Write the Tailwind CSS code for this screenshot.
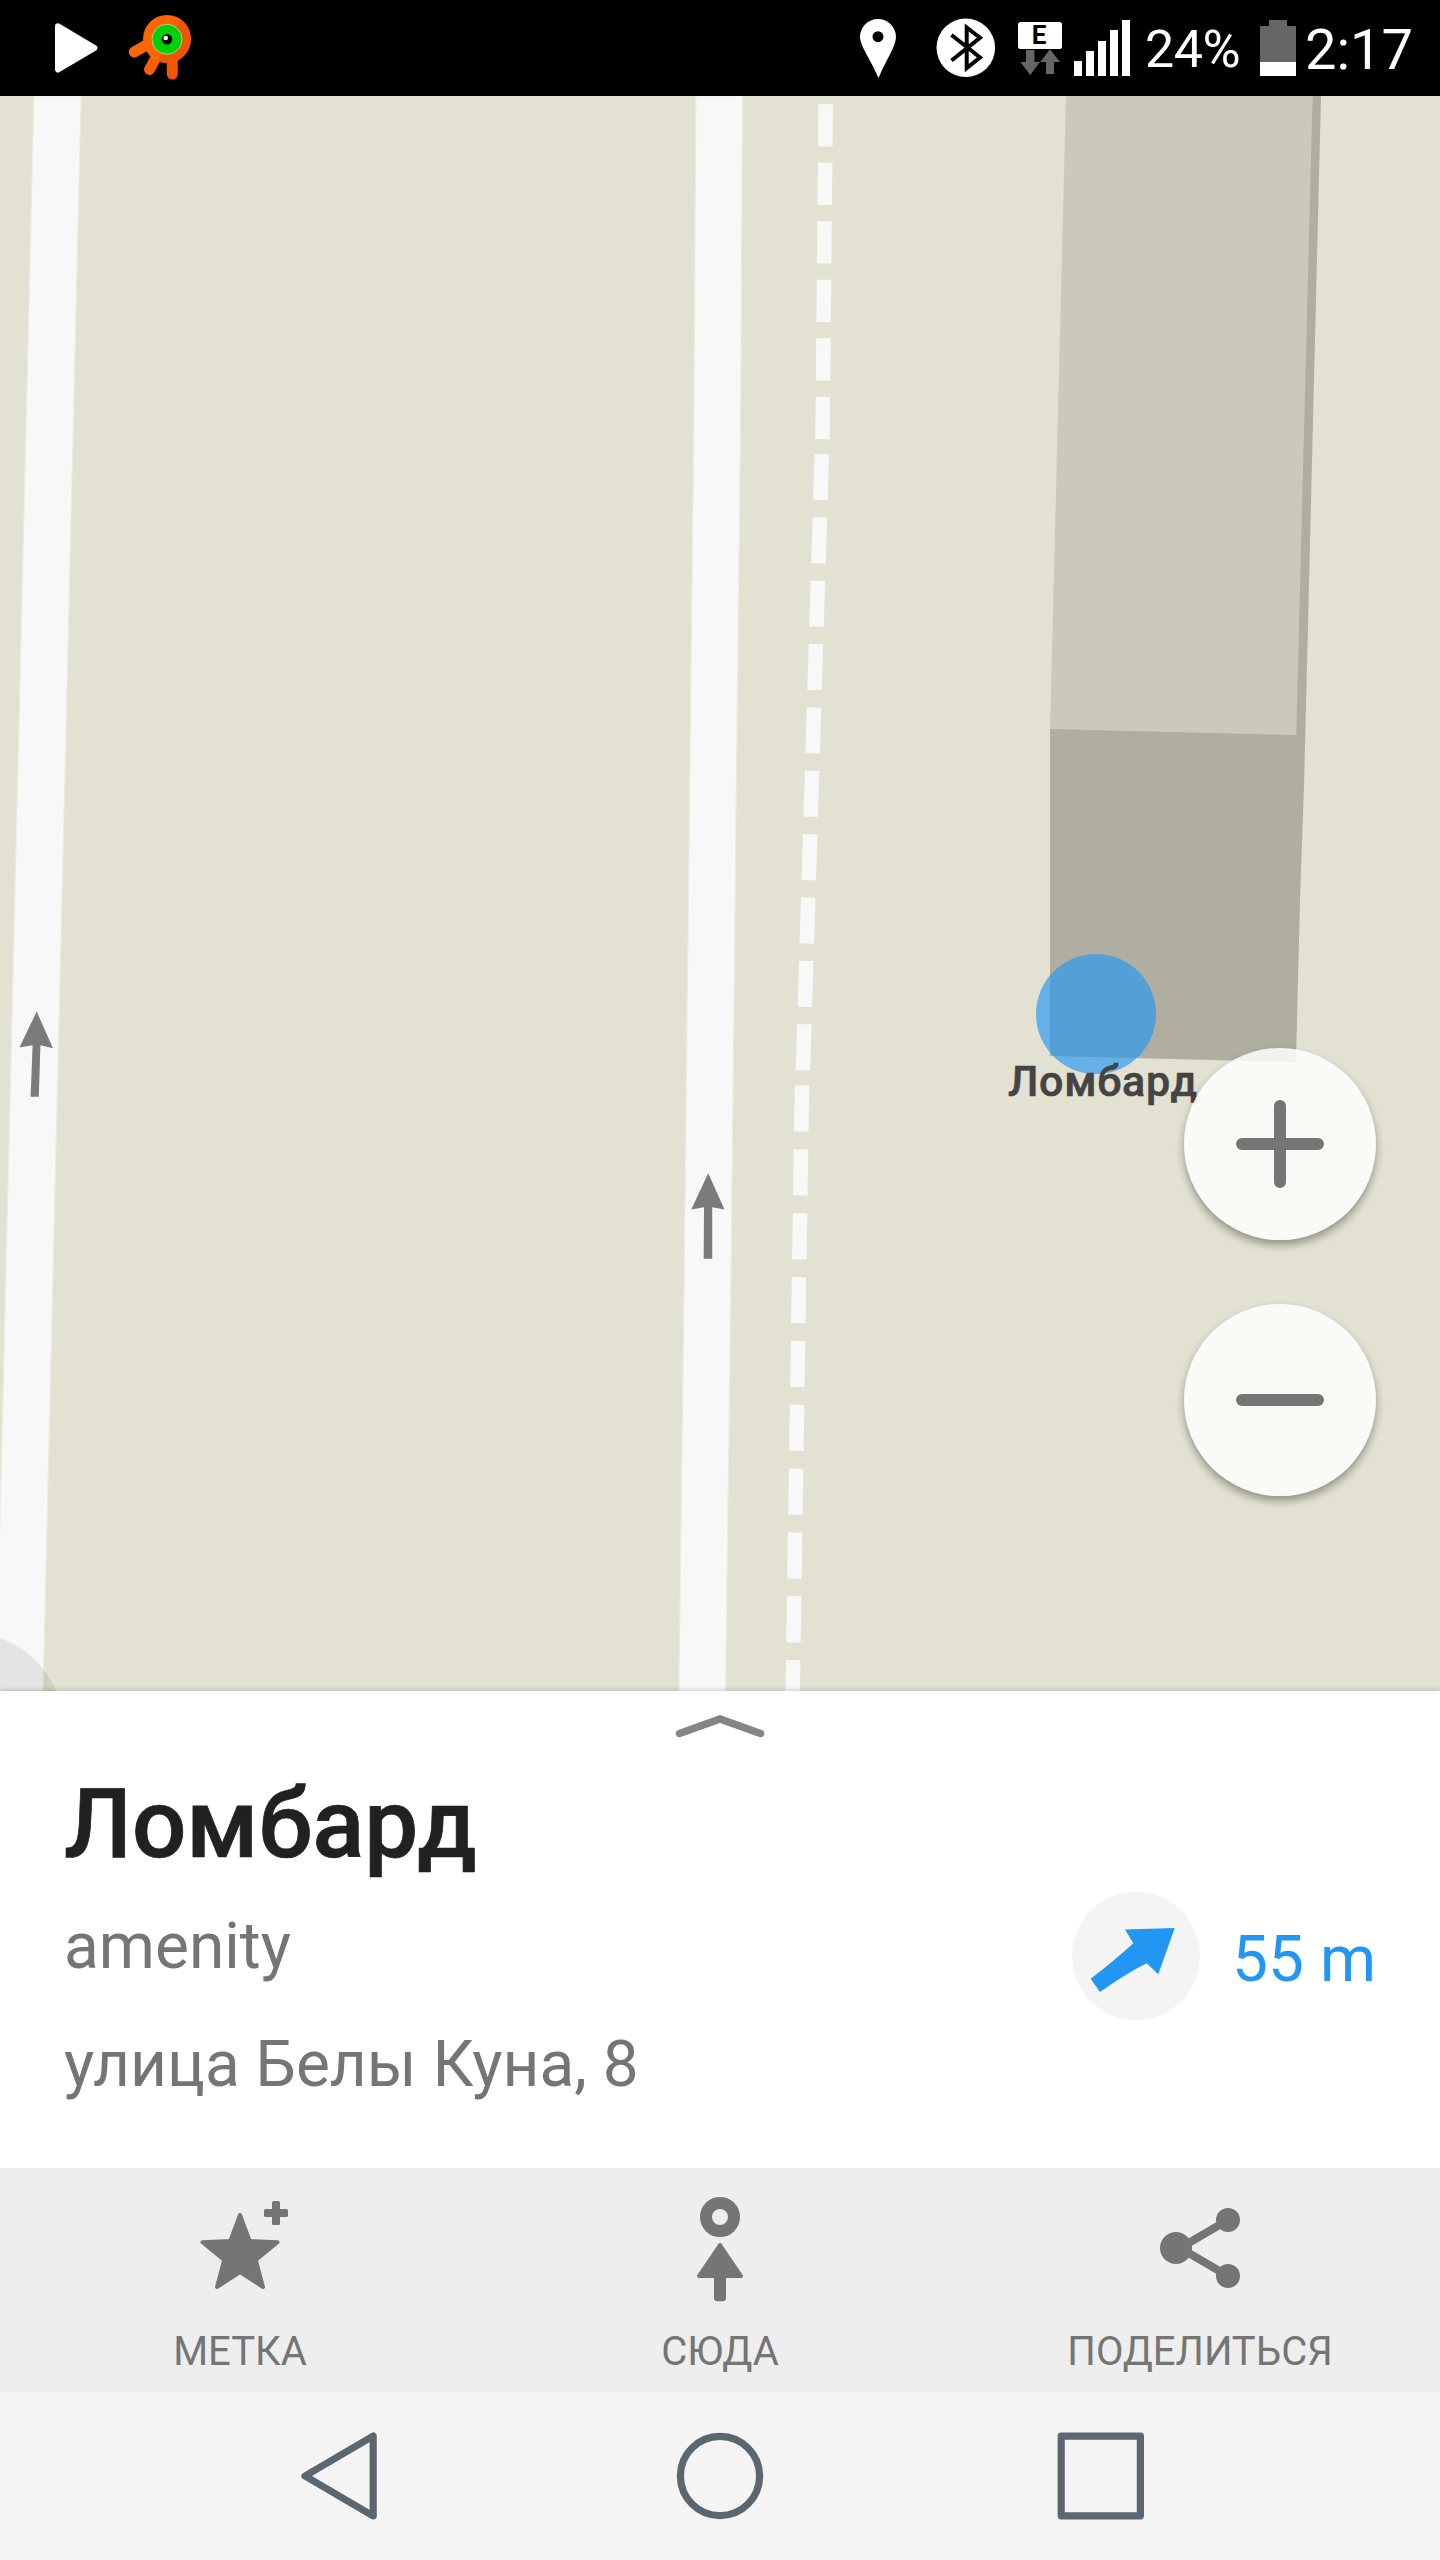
<!DOCTYPE html>
<html lang="ru">
<head>
    <meta charset="UTF-8">
    <meta name="viewport" content="width=device-width, initial-scale=1.0">
    <title>Ломбард</title>
    <script src="https://cdn.jsdelivr.net/npm/@tailwindcss/browser@4"></script>
</head>
<body class="w-[1440px] h-[2560px] flex flex-col overflow-hidden bg-white font-['Roboto',sans-serif]">

    <!-- Status bar -->
    <header class="h-24 shrink-0 bg-black text-white flex items-center justify-between pl-[55px] pr-[28px]">
        <div class="flex items-center gap-[30px]">
            <svg class="w-[43px] h-24" viewBox="55 0 43 96" fill="#fff">
                <path d="M58 26.300L94.500 48L58 69.500Z" stroke="#fff" stroke-width="6" stroke-linejoin="round"/>
            </svg>
            <svg class="w-[64px] h-24" viewBox="128 0 64 96">
                <g stroke-width="11" stroke-linecap="round">
                    <path d="M150 43L134.300 52" stroke="#ff6600"/>
                    <path d="M159 52L149.500 69.500" stroke="#fb5f02"/>
                    <path d="M172.300 55V74" stroke="#f75600"/>
                </g>
                <circle cx="167" cy="39" r="24" fill="#ff6600"/>
                <path d="M180 19A24 24 0 0 1 158 61.300Z" fill="#ed5504"/>
                <circle cx="167" cy="39.300" r="15" fill="#00d00a" stroke="#b5d08a" stroke-width="1"/>
                <circle cx="167" cy="39.300" r="5.300" fill="#000"/>
                <circle cx="165.700" cy="38" r="2.300" fill="#fff"/>
            </svg>
        </div>
        <div class="flex items-center">
            <svg class="w-[36px] h-24 mr-[40px]" viewBox="860 0 36 96">
                <path fill="#fff" fill-rule="evenodd" d="M878 19C888 19 896 27 896 37C896 46 886 60 878.500 78C871 60 860 46 860 37C860 27 868 19 878 19ZM878 31.200A5.500 5.500 0 1 0 878 42.200A5.500 5.500 0 1 0 878 31.200Z"/>
            </svg>
            <svg class="w-[60px] h-24 mr-[22px]" viewBox="936 0 60 96">
                <circle cx="965.800" cy="47.800" r="29.300" fill="#fff"/>
                <path d="M951.500 35L980 57.500L966.700 68V27.500L980 37.700L951.500 60.500" fill="none" stroke="#000" stroke-width="4"/>
            </svg>
            <div class="relative w-[44px] h-24 mr-[12px]">
                <svg class="w-[44px] h-24" viewBox="1018 0 44 96">
                    <rect x="1018" y="22" width="44" height="27" rx="2.500" fill="#fff"/>
                    <path fill="#666" d="M1026 50H1034.400V62H1040L1030.300 75L1020.300 62H1026ZM1050 49.300L1060 62H1054V74H1046V62H1040.200Z"/>
                </svg>
                <span class="absolute left-0 top-[22px] w-[42px] h-[27px] leading-[27px] text-center text-black font-bold text-[26px]">E</span>
            </div>
            <div class="flex items-end gap-1 h-[56px] mr-[16px]">
                <div class="w-2 h-[15px] bg-white"></div>
                <div class="w-2 h-[25px] bg-white"></div>
                <div class="w-2 h-[35px] bg-white"></div>
                <div class="w-2 h-[46px] bg-white"></div>
                <div class="w-2 h-[56px] bg-white"></div>
            </div>
            <span class="w-[114px] text-[52px] leading-[96px] relative top-[2px] -left-px tracking-[-0.5px] whitespace-nowrap">24%</span>
            <svg class="w-[36px] h-24 mr-[9px]" viewBox="1260 0 36 96">
                <path fill="#666" d="M1269 20H1287V26H1296V62H1260V26H1269Z"/>
                <path fill="#fff" d="M1260 62H1296V76H1260Z"/>
            </svg>
            <span class="w-[107px] text-[56px] leading-[96px] relative top-[2px] whitespace-nowrap">2:17</span>
        </div>
    </header>

    <!-- Map -->
    <main class="relative h-[1595px] shrink-0 overflow-hidden bg-[#e2e1d2]">
        <svg class="block w-[1440px] h-[1595px]" viewBox="0 96 1440 1595">
            <!-- roads -->
            <g fill="#f8f8f8" stroke="#eeede4" stroke-width="1">
                <path d="M34 96H81L43 1691H-4Z"/>
                <path d="M696 96H742.500L740.500 419L736.300 780L734.500 960L730.800 1280L725.500 1691H679L684.200 1280L687.800 960L689.800 780L694 419Z"/>
            </g>
            <!-- footway -->
            <g fill="none" stroke="#f8f8f8" stroke-width="14.500">
                <path d="M825.700 104.100L822.500 440" stroke-dasharray="42.300 16.250"/>
                <path d="M821.800 454.100L802.900 1070.500" stroke-dasharray="46 17.380"/>
                <path d="M802 1085.500L792.700 1691" stroke-dasharray="46.200 17.650"/>
            </g>
            <!-- one-way arrows -->
            <g fill="#7b7b7b">
                <path d="M36.700 1011.500L53 1048.300L40.400 1045.300L38.800 1096.800H30.600L32.600 1045.200L19.400 1047.500Z"/>
                <path d="M708.200 1173.300L724.500 1209.500L712.200 1207.300V1258.700H703.700L704 1207.300L691.300 1209.500Z"/>
            </g>
            <!-- building -->
            <path fill="#b0aea1" d="M1312 96H1321L1304.200 780L1300 900L1296 1062L1050 1056V729L1200 600Z"/>
            <path fill="#cbc9bb" d="M1066 96H1312.600L1296.200 735L1050 729Z"/>
            <!-- selected place -->
            <circle cx="1096" cy="1014" r="60" fill="#2498f1" fill-opacity=".66"/>
            <text x="1008" y="1096" textLength="189" font-size="43" font-weight="500" fill="#444" stroke="#444" stroke-width=".6">Ломбард</text>
            <circle cx="-32" cy="1728" r="95.500" fill="#000" fill-opacity=".08"/>
        </svg>
        <div class="absolute left-[1184px] top-[952px] flex flex-col gap-[64px]">
            <button class="size-48 rounded-full bg-[#fefefd]/85 shadow-[0_5px_8px_rgba(0,0,0,0.35)]">
                <svg class="size-48" viewBox="0 0 192 192" stroke="#757575" stroke-width="12" stroke-linecap="round">
                    <path d="M58 96H134M96 58V134"/>
                </svg>
            </button>
            <button class="size-48 rounded-full bg-[#fefefd]/85 shadow-[0_5px_8px_rgba(0,0,0,0.35)]">
                <svg class="size-48" viewBox="0 0 192 192" stroke="#757575" stroke-width="12" stroke-linecap="round">
                    <path d="M58 96H134"/>
                </svg>
            </button>
        </div>
    </main>

    <!-- Place card -->
    <section class="relative h-[477px] shrink-0 bg-white px-16 flex flex-col shadow-[0_-1px_5px_rgba(0,0,0,0.18)]">
        <svg class="w-[96px] h-[32px] mt-[20px] mx-auto shrink-0" viewBox="672 1711 96 32" fill="none" stroke="#858585" stroke-width="7.500" stroke-linecap="round">
            <path d="M679.500 1733.500L720 1719L760.500 1733.500"/>
        </svg>
        <h1 class="mt-[24px] h-[114px] leading-[114px] text-[96px] font-medium text-[#212121] [-webkit-text-stroke:0.7px_#212121]">Ломбард</h1>
        <div class="mt-[1px] flex justify-between">
            <div class="text-[64px] text-[#757575]">
                <p class="mt-[27px] h-[75px] leading-[75px]">amenity</p>
                <p class="mt-[43px] h-[75px] leading-[75px]">улица Белы Куна, 8</p>
            </div>
            <div class="flex items-center gap-[32px] h-[128px] mt-[10px]">
                <svg class="size-32" viewBox="1072 1892 128 128">
                    <circle cx="1136" cy="1956" r="64" fill="#f4f4f4"/>
                    <path fill="#2196f3" d="M1125 1929.500L1174.700 1928L1158.300 1974.300L1146.700 1963.300Q1127 1973 1100 1992L1090.700 1978.700Q1114 1961 1133.300 1943.300Z"/>
                </svg>
                <span class="text-[64px] leading-[75px] text-[#2196f3] relative top-[3px]">55 m</span>
            </div>
        </div>
    </section>

    <!-- Actions -->
    <nav class="relative h-[224px] shrink-0 bg-[#eeeeee] text-[#757575] grid grid-cols-3 text-[40px] leading-[47px]">
        <a class="flex flex-col items-center pt-6">
            <svg class="size-32" viewBox="176 2192 128 128" fill="currentColor">
                <path stroke="currentColor" stroke-width="4" stroke-linejoin="round" d="M240 2215L249.700 2241L277.500 2242.300L255.800 2260L263 2287L240 2272L217 2287L224.200 2260L202.500 2242.300L230.300 2241Z"/>
                <rect x="264" y="2209" width="24" height="8" rx="1.500"/>
                <rect x="272" y="2201" width="8" height="24" rx="1.500"/>
            </svg>
            <span class="mt-2">МЕТКА</span>
        </a>
        <a class="flex flex-col items-center pt-6">
            <svg class="size-32" viewBox="656 2192 128 128" fill="currentColor">
                <circle cx="720" cy="2217" r="14" fill="none" stroke="currentColor" stroke-width="12"/>
                <path stroke="currentColor" stroke-width="4" stroke-linejoin="round" d="M720 2245L741 2276H699Z"/>
                <path d="M714 2274H726V2298Q726 2301.300 722.500 2301.300H717.500Q714 2301.300 714 2298Z"/>
            </svg>
            <span class="mt-2">СЮДА</span>
        </a>
        <a class="flex flex-col items-center pt-6">
            <svg class="size-32" viewBox="1136 2192 128 128" fill="currentColor">
                <path d="M1228 2220L1180 2248L1228 2276" fill="none" stroke="currentColor" stroke-width="8"/>
                <circle cx="1176" cy="2248" r="16"/>
                <circle cx="1228" cy="2220" r="12"/>
                <circle cx="1228" cy="2276" r="12"/>
            </svg>
            <span class="mt-2">ПОДЕЛИТЬСЯ</span>
        </a>
    </nav>

    <!-- System navigation -->
    <footer class="h-[168px] shrink-0 bg-[#f4f4f4] flex items-center pl-[300px]">
        <svg class="w-[78px] h-[90px] mr-[298px]" viewBox="300 2431 78 90" fill="none" stroke="#5b6770" stroke-width="7.200" stroke-linejoin="round">
            <path d="M373.200 2436V2516L305 2476Z"/>
        </svg>
        <svg class="size-[88px] mr-[293px]" viewBox="676 2432 88 88" fill="none" stroke="#5b6770" stroke-width="7.200">
            <circle cx="720" cy="2476" r="39.600"/>
        </svg>
        <svg class="size-[88px]" viewBox="1057 2432 88 88" fill="none" stroke="#5b6770" stroke-width="7.200" stroke-linejoin="round">
            <rect x="1061.200" y="2436.200" width="79.200" height="79.600"/>
        </svg>
    </footer>

</body>
</html>
